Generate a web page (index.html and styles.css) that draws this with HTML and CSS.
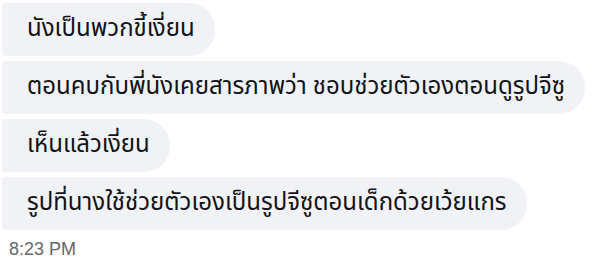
FILE: index.html
```html
<!DOCTYPE html>
<html lang="th">
<head>
    <meta charset="UTF-8">
    <meta name="viewport" content="width=device-width, initial-scale=1.0">
    <title>Chat</title>
    <link rel="stylesheet" href="styles.css">
</head>
<body>
    <div class="thread">
        <div class="bubble">นังเป็นพวกขี้เงี่ยน</div>
        <div class="bubble">ตอนคบกับพี่นังเคยสารภาพว่า ชอบช่วยตัวเองตอนดูรูปจีซู</div>
        <div class="bubble">เห็นแล้วเงี่ยน</div>
        <div class="bubble">รูปที่นางใช้ช่วยตัวเองเป็นรูปจีซูตอนเด็กด้วยเว้ยแกร</div>
        <div class="time">8:23 PM</div>
    </div>
</body>
</html>
```

FILE: styles.css
```css
/* chat thread */
body {
    margin: 0;
    padding: 0;
    background-color: #fff;
    font-family: "Noto Sans Thai", "Noto Sans", "Liberation Sans", sans-serif;
}

.thread {
    display: flex;
    flex-direction: column;
    align-items: flex-start;
    gap: 5px;
    padding: 3px 0 0 2px;
}

.bubble {
    background-color: #f0f2f5;
    color: #111318;
    font-size: 24px;
    line-height: 53px;
    height: 53px;
    padding: 0 20px 0 25px;
    border-radius: 4px 26px 26px 4px;
    white-space: nowrap;
}

.time {
    font-family: "Liberation Sans", Arial, sans-serif;
    font-size: 18px;
    line-height: 18px;
    color: #65676b;
    margin: 5px 0 0 7px;
}
```
